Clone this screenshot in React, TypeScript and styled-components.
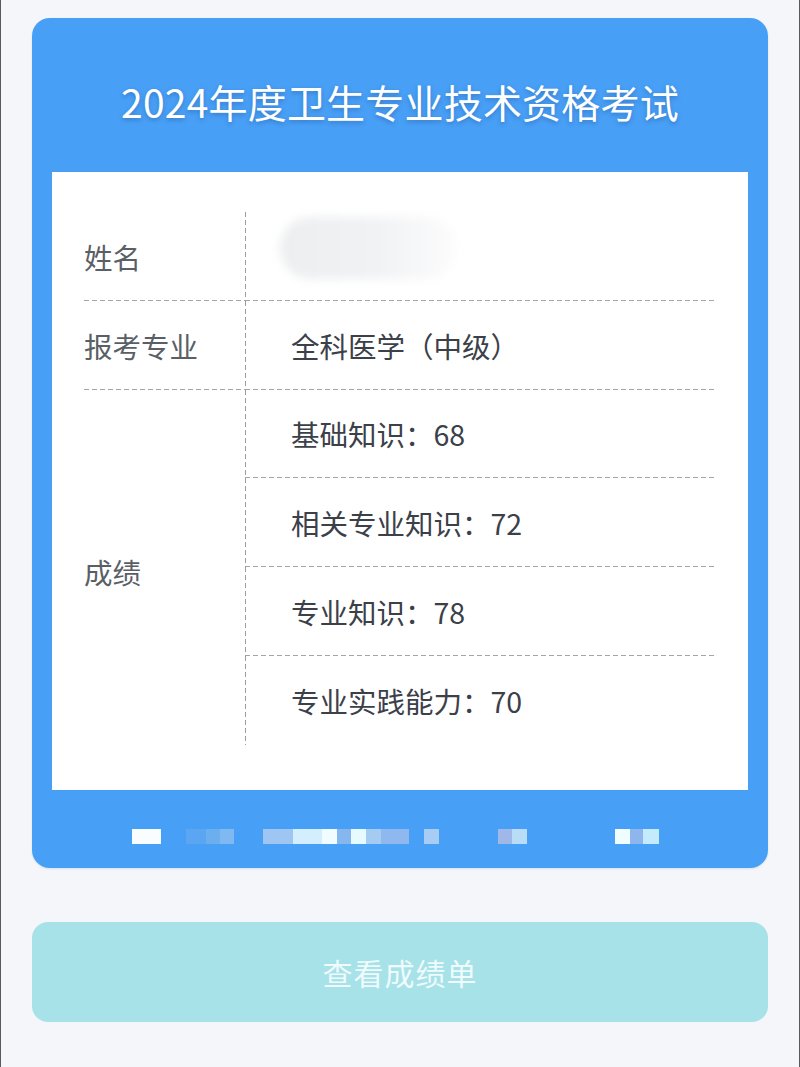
import React from "react";
import styled, { createGlobalStyle } from "styled-components";

const Global = createGlobalStyle`
  html, body { margin: 0; padding: 0; background: #f4f6f9; }
  body { font-family: "Noto Sans CJK SC", "Noto Sans", sans-serif; }
  * { box-sizing: border-box; }
`;

const hDash =
  "repeating-linear-gradient(90deg, #a3a5a9 0 5px, transparent 5px 8px) left bottom / 100% 1px no-repeat";
const vDash =
  "repeating-linear-gradient(180deg, #9a9ca0 0 5px, transparent 5px 8px) left top / 1px 100% no-repeat";

const Page = styled.div`
  width: 800px;
  min-height: 1067px;
  background: #f4f6f9;
  border-left: 1px solid #5a5a5a;
  border-right: 1px solid #5a5a5a;
  padding: 18px 31px 0;
  display: flex;
  flex-direction: column;
`;

const Card = styled.section`
  background: #489ff6;
  border-radius: 18px;
  display: flex;
  flex-direction: column;
  padding: 0 20px;
  box-shadow: 0 1px 2px rgba(40, 110, 200, 0.15);
`;

const Title = styled.h1`
  margin: 0;
  height: 154px;
  padding-top: 12px;
  display: flex;
  align-items: center;
  justify-content: center;
  color: #ffffff;
  font-size: 39px;
  font-weight: 400;
  letter-spacing: 0.2px;
  text-shadow: 0 2px 4px rgba(20, 60, 120, 0.35);
`;

const Panel = styled.div`
  background: #ffffff;
  padding: 40px 33px 45px 32px;
`;

const Table = styled.div`
  display: grid;
  grid-template-columns: 161px 1fr;
  grid-auto-rows: 88.8px;
`;

const LabelCell = styled.div<{ $span?: number; $line?: boolean }>`
  grid-row: ${(p) => (p.$span ? `span ${p.$span}` : "auto")};
  display: flex;
  align-items: center;
  padding-top: ${(p) => (p.$span ? "8px" : "0")};
  font-size: 28.5px;
  color: #5a5f66;
  background: ${(p) => (p.$line ? hDash : "none")};
`;

const ValueCell = styled.div<{ $line?: boolean }>`
  display: flex;
  align-items: center;
  padding-left: 46px;
  font-size: 28.5px;
  color: #3b4049;
  background: ${(p) => (p.$line ? `${vDash}, ${hDash}` : vDash)};
`;

const BlurName = styled.div`
  width: 176px;
  height: 62px;
  margin-left: -11px;
  margin-top: -16px;
  border-radius: 31px;
  background: linear-gradient(90deg, #eceef0 0%, #f1f2f4 55%, #fcfcfd 100%);
  filter: blur(5px);
`;

const Footer = styled.div`
  height: 78px;
  padding: 39px 0 0 80px;
  display: flex;
  align-items: flex-start;
`;

const Mosaic = styled.div`
  display: flex;
  height: 15px;
`;

const Cell = styled.span<{ $w: number; $c: string }>`
  width: ${(p) => p.$w}px;
  height: 100%;
  background: ${(p) => p.$c};
`;

const Button = styled.button`
  margin-top: 54px;
  height: 100px;
  width: 100%;
  border: none;
  border-radius: 16px;
  background: #a6e2e8;
  color: #effbfc;
  font-family: "Noto Sans CJK SC", "Noto Sans", sans-serif;
  font-size: 30px;
  font-weight: 400;
  letter-spacing: 1px;
`;

const mosaic: [number, string][] = [
  [29, "#fafdff"],
  [25, "transparent"],
  [20, "#5ba6f2"],
  [14, "#6cafef"],
  [14, "#80b8f1"],
  [29, "transparent"],
  [30, "#9fc6f3"],
  [29, "#d3eefc"],
  [15, "#f0fcff"],
  [14, "#86b6ee"],
  [15, "#e6fbff"],
  [15, "#a6cbf2"],
  [28, "#8fb9ee"],
  [15, "transparent"],
  [15, "#a8cdf5"],
  [59, "transparent"],
  [14, "#9fb8e8"],
  [15, "#b9ddf7"],
  [88, "transparent"],
  [15, "#f0fdff"],
  [13, "#8fb6ec"],
  [16, "#c4ebfc"],
];

const scores = [
  "基础知识：68",
  "相关专业知识：72",
  "专业知识：78",
  "专业实践能力：70",
];

export default function App() {
  return (
    <>
      <Global />
      <Page>
        <Card>
          <Title>2024年度卫生专业技术资格考试</Title>
          <Panel>
            <Table>
              <LabelCell $line>姓名</LabelCell>
              <ValueCell $line>
                <BlurName />
              </ValueCell>
              <LabelCell $line>报考专业</LabelCell>
              <ValueCell $line>全科医学（中级）</ValueCell>
              <LabelCell $span={4}>成绩</LabelCell>
              {scores.map((s, i) => (
                <ValueCell key={s} $line={i < scores.length - 1}>
                  {s}
                </ValueCell>
              ))}
            </Table>
          </Panel>
          <Footer>
            <Mosaic>
              {mosaic.map(([w, c], i) => (
                <Cell key={i} $w={w} $c={c} />
              ))}
            </Mosaic>
          </Footer>
        </Card>
        <Button type="button">查看成绩单</Button>
      </Page>
    </>
  );
}
